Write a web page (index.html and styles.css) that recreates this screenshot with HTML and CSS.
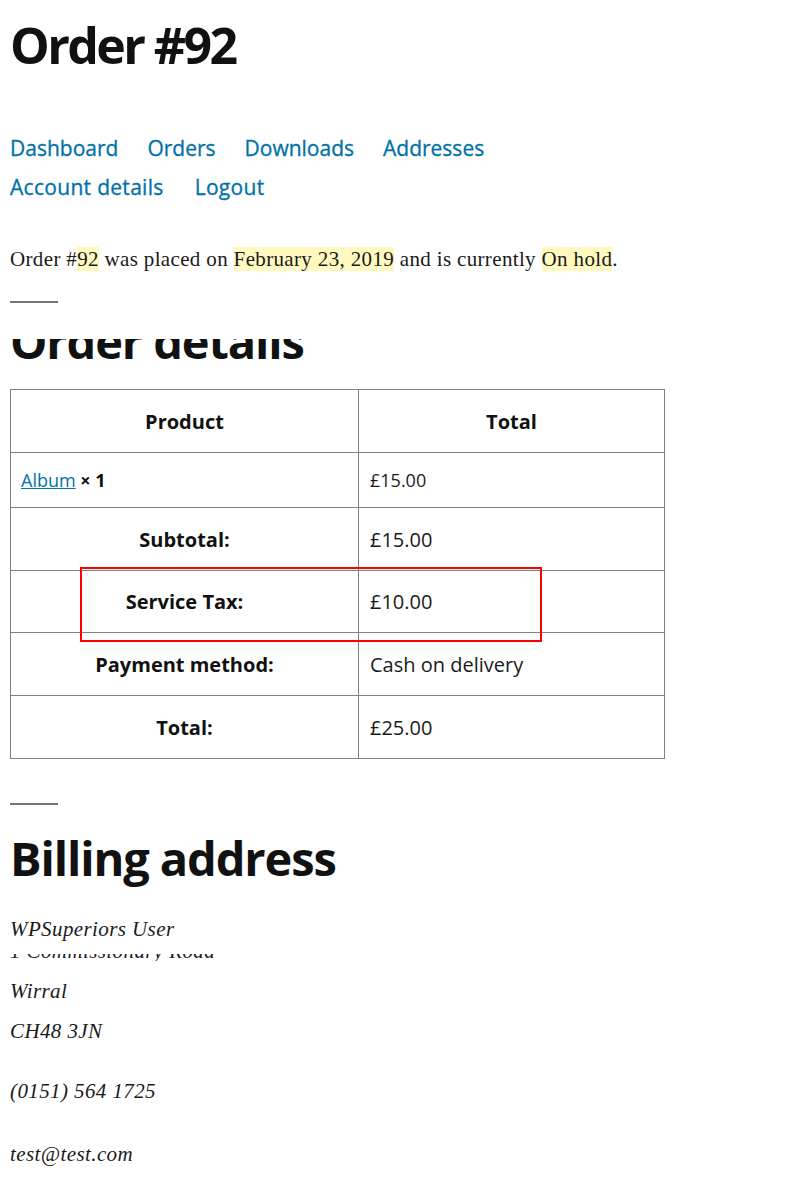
FILE: index.html
```html
<!DOCTYPE html>
<html lang="en">
<head>
<meta charset="utf-8">
<title>Order #92</title>
<link rel="stylesheet" href="styles.css">
</head>
<body>
<div class="page">
  <h1 class="page-title">Order #92</h1>
  <nav class="account-nav">
    <a href="#">Dashboard</a>
    <a href="#">Orders</a>
    <a href="#">Downloads</a>
    <a href="#">Addresses</a>
    <a href="#">Account details</a>
    <a href="#">Logout</a>
  </nav>
  <p class="order-summary">Order #<mark>92</mark> was placed on <mark>February 23, 2019</mark> and is currently <mark>On hold</mark>.</p>
  <hr class="sep">
  <div class="clip-heading"><h2 class="section-title inner">Order details</h2></div>
  <div class="table-wrap">
    <table class="order-table">
      <thead>
        <tr class="r-head"><th>Product</th><th>Total</th></tr>
      </thead>
      <tbody>
        <tr class="r-item"><td class="item-name"><a href="#">Album</a> <strong>× 1</strong></td><td class="item-total">£15.00</td></tr>
      </tbody>
      <tfoot>
        <tr class="r-foot"><th>Subtotal:</th><td>£15.00</td></tr>
        <tr class="r-foot r-tax"><th>Service Tax:</th><td>£10.00</td></tr>
        <tr class="r-foot"><th>Payment method:</th><td>Cash on delivery</td></tr>
        <tr class="r-foot"><th>Total:</th><td>£25.00</td></tr>
      </tfoot>
    </table>
    <div class="highlight-box"></div>
  </div>
  <hr class="sep sep-2">
  <h2 class="section-title billing">Billing address</h2>
  <address class="addr">
    <div class="addr-line">WPSuperiors User</div>
    <div class="addr-clip"><div class="addr-line">1 Commissionary Road</div></div>
    <div class="addr-line addr-city">Wirral</div>
    <div class="addr-line">CH48 3JN</div>
    <div class="addr-line addr-phone">(0151) 564 1725</div>
    <div class="addr-line addr-email">test@test.com</div>
  </address>
</div>
</body>
</html>
```
FILE: styles.css
```css
html, body {
  margin: 0;
  padding: 0;
  background: #ffffff;
}

.page {
  padding: 0 10px;
  color: #1a1a1a;
  font-family: "Liberation Serif", serif;
}

.page-title {
  margin: 14px 0 0;
  font-family: "Open Sans", sans-serif;
  font-weight: 700;
  font-size: 50px;
  line-height: 62px;
  color: #111111;
  letter-spacing: -2.6px;
}

.account-nav {
  margin-top: 53px;
  display: flex;
  flex-wrap: wrap;
  column-gap: 29px;
  width: 500px;
  font-family: "Open Sans", sans-serif;
  font-size: 21px;
  line-height: 39px;
}

.account-nav a {
  color: #0071a8;
  text-decoration: none;
  -webkit-text-stroke: 0.3px #0071a8;
}

.account-nav a:nth-child(n+5) {
  letter-spacing: 0.3px;
}

.account-nav a:nth-child(6) {
  margin-left: 2px;
}

.order-summary {
  margin: 37px 0 0;
  font-size: 21px;
  line-height: 31.5px;
  letter-spacing: 0.35px;
}

.order-summary mark {
  background: #fff9c0;
  color: inherit;
}

.sep {
  margin: 25px 0 0;
  border: 0;
  width: 48px;
  height: 2px;
  background: #767676;
}

.sep-2 {
  margin-top: 44px;
}

.section-title {
  font-family: "Open Sans", sans-serif;
  font-weight: 700;
  font-size: 47px;
  color: #111111;
  margin: 0;
  letter-spacing: -1.1px;
}

.clip-heading {
  margin-top: 36px;
  height: 21px;
  overflow: hidden;
}

.clip-heading .inner {
  line-height: 48px;
  margin-top: -22px;
}

.table-wrap {
  position: relative;
  margin-top: 29px;
  width: 655px;
}

.order-table {
  width: 655px;
  border-collapse: collapse;
  table-layout: fixed;
  font-family: "Open Sans", sans-serif;
}

.order-table th,
.order-table td {
  border: 1px solid #808080;
  padding: 1px 11px 0;
  vertical-align: middle;
}

.order-table th:first-child,
.order-table td:first-child {
  width: 348px;
  box-sizing: border-box;
}

.order-table th {
  font-weight: 700;
  text-align: center;
  font-size: 20px;
  color: #111111;
}

.order-table td {
  font-size: 20px;
  color: #1a1a1a;
}

.r-head { height: 63px; }
.r-item { height: 55px; }
.r-foot { height: 63px; }
.r-tax { height: 62px; }

.r-item td {
  font-size: 18px;
}

.item-name {
  padding-left: 10px !important;
}

.item-name a {
  color: #0073aa;
  text-decoration: underline;
}

.item-name strong {
  font-weight: 700;
  color: #111111;
}

.highlight-box {
  position: absolute;
  left: 70px;
  top: 178px;
  width: 458px;
  height: 71px;
  border: 2px solid #ff0000;
}

.billing {
  margin-top: 25px;
  line-height: 57.6px;
}

.addr {
  margin-top: 22px;
  font-style: italic;
  font-size: 21px;
  letter-spacing: 0.4px;
  display: flex;
  flex-direction: column;
}

.addr-line {
  line-height: 40px;
  height: 40px;
}

.addr-clip {
  margin-top: 5px;
  height: 7px;
  overflow: hidden;
}

.addr-clip .addr-line {
  margin-top: -23px;
}

.addr-city {
  margin-top: 10px;
}

.addr-phone {
  margin-top: 20px;
}

.addr-email {
  margin-top: 23px;
}
```
